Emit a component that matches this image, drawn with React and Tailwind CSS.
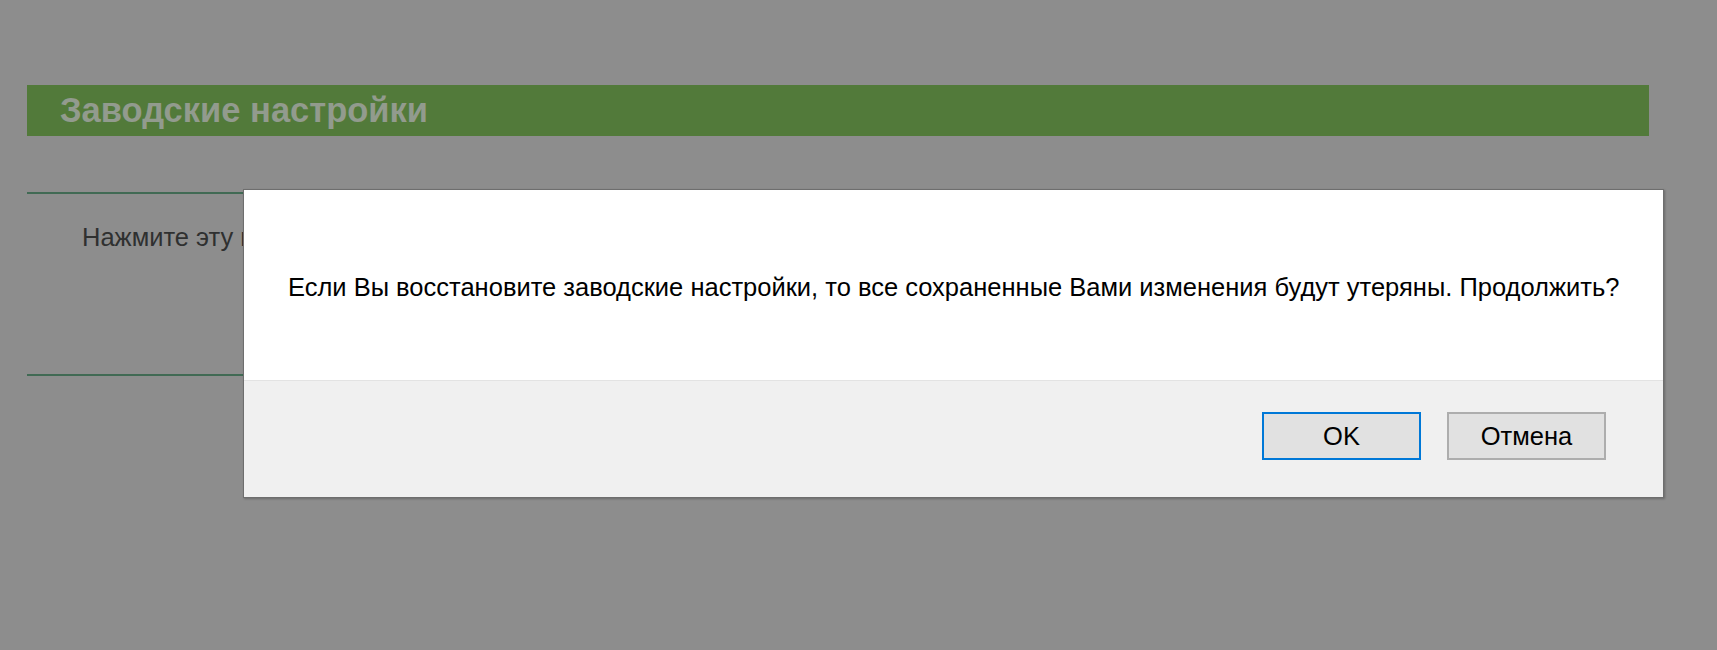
export default function App() {
  return (
    <div
      className="relative w-full h-[650px] overflow-hidden bg-[#8d8d8d]"
      style={{ fontFamily: '"Liberation Sans", Arial, sans-serif' }}
    >
      {/* page under the overlay */}
      <div className="pt-[85px] pl-[27px] w-[1649px]">
        <div className="h-[51px] bg-[#527a3a] flex items-center pl-[33px]">
          <h1 className="text-[34.5px] font-bold text-[#929b8e] leading-none">
            Заводские настройки
          </h1>
        </div>
        <div className="mt-[56px] h-[184px] border-t-2 border-b-2 border-[#416a54] pl-[55px] pt-[24px]">
          <p className="text-[25.5px] text-[#2f3030]">
            Нажмите эту кнопку, чтобы восстановить заводские настройки.
          </p>
        </div>
      </div>

      {/* confirm dialog */}
      <div className="absolute left-[243px] top-[189px] w-[1421px] h-[309px] flex flex-col bg-white border border-[#6e6e6e] shadow-[1px_1px_2px_rgba(0,0,0,0.25)]">
        <div className="h-[190px] flex items-center px-[44px] pt-[4px]">
          <p className="text-[25.5px] text-black whitespace-nowrap">
            Если Вы восстановите заводские настройки, то все сохраненные Вами изменения будут утеряны. Продолжить?
          </p>
        </div>
        <div className="flex-1 bg-[#f0f0f0] border-t border-[#e3e3e3] flex justify-end items-start gap-[26px] pt-[31px] pr-[57px]">
          <button className="w-[159px] h-[48px] bg-[#e1e1e1] border-2 border-[#0078d7] text-[25.5px] text-black">
            OK
          </button>
          <button className="w-[159px] h-[48px] bg-[#e1e1e1] border-2 border-[#adadad] text-[25.5px] text-black">
            Отмена
          </button>
        </div>
      </div>
    </div>
  );
}
